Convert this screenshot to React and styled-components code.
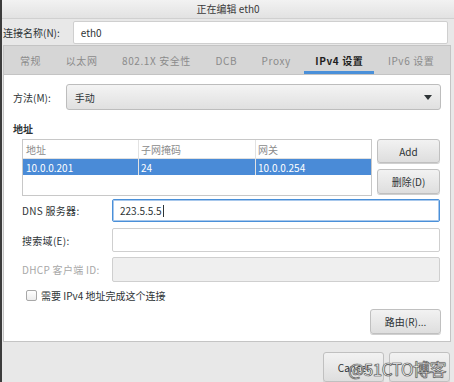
import React from "react";
import styled, { createGlobalStyle } from "styled-components";

const GlobalStyle = createGlobalStyle`
  html, body {
    margin: 0;
    padding: 0;
    background: #e8e8e8;
  }
  body {
    font-family: "Noto Sans CJK SC", "Noto Sans", sans-serif;
    font-size: 10px;
    color: #2e3436;
  }
`;

const tabs = ["常规", "以太网", "802.1X 安全性", "DCB", "Proxy", "IPv4 设置", "IPv6 设置"];

const App = () => {
  return (
    <>
      <GlobalStyle />
      <StyledWindow>
        <StyledTitleBar>正在编辑 eth0</StyledTitleBar>
        <StyledNameRow>
          <StyledLabel>连接名称(N):</StyledLabel>
          <StyledInput $width="375px">eth0</StyledInput>
        </StyledNameRow>
        <StyledNotebook>
          <StyledTabBar>
            {tabs.map((tab) => (
              <StyledTab key={tab} $active={tab === "IPv4 设置"}>
                {tab}
              </StyledTab>
            ))}
          </StyledTabBar>
          <StyledPage>
            <StyledMethodRow>
              <StyledLabel>方法(M):</StyledLabel>
              <StyledCombo>
                <span>手动</span>
                <svg width="8" height="5" viewBox="0 0 8 5">
                  <path d="M0 0 L8 0 L4 5 Z" fill="#2e3436" />
                </svg>
              </StyledCombo>
            </StyledMethodRow>
            <StyledHeading>地址</StyledHeading>
            <StyledAddressBlock>
              <StyledTable>
                <StyledTableRow $header>
                  <StyledCell $first>地址</StyledCell>
                  <StyledCell>子网掩码</StyledCell>
                  <StyledCell $last>网关</StyledCell>
                </StyledTableRow>
                <StyledTableRow $selected>
                  <StyledCell $first>10.0.0.201</StyledCell>
                  <StyledCell>24</StyledCell>
                  <StyledCell $last>10.0.0.254</StyledCell>
                </StyledTableRow>
              </StyledTable>
              <StyledButtonColumn>
                <StyledButton $height="24px">Add</StyledButton>
                <StyledButton $height="25px">删除(D)</StyledButton>
              </StyledButtonColumn>
            </StyledAddressBlock>
            <StyledFieldRow $mt="3px">
              <StyledFieldLabel>DNS 服务器:</StyledFieldLabel>
              <StyledInput $width="328px" $focused>
                223.5.5.5<StyledCaret />
              </StyledInput>
            </StyledFieldRow>
            <StyledFieldRow $mt="6px">
              <StyledFieldLabel>搜索域(E):</StyledFieldLabel>
              <StyledInput $width="328px" $height="24px" />
            </StyledFieldRow>
            <StyledFieldRow $mt="5px">
              <StyledFieldLabel $disabled>DHCP 客户端 ID:</StyledFieldLabel>
              <StyledInput $width="328px" $height="25px" $disabled />
            </StyledFieldRow>
            <StyledCheckRow>
              <StyledCheckbox />
              <span>需要 IPv4 地址完成这个连接</span>
            </StyledCheckRow>
            <StyledRouteRow>
              <StyledButton $width="71px" $height="25px">
                路由(R)...
              </StyledButton>
            </StyledRouteRow>
          </StyledPage>
        </StyledNotebook>
        <StyledFooter>
          <StyledButton $width="61px" $height="30px">
            Cancel
          </StyledButton>
          <StyledButton $width="61px" $height="30px" />
          <StyledWatermark>@51CTO博客</StyledWatermark>
        </StyledFooter>
      </StyledWindow>
    </>
  );
};

const StyledWindow = styled.div`
  position: relative;
  width: 452px;
  height: 382px;
  overflow: hidden;
  background: #e8e8e8;
  border-left: 2px solid #3c3c3c;
  display: flex;
  flex-direction: column;
`;

const StyledTitleBar = styled.div`
  height: 20px;
  line-height: 18px;
  text-align: center;
  color: #3a3a3a;
  background: linear-gradient(#f2f2f2, #e2e2e2);
  border-bottom: 1px solid #d0d0d0;
  box-sizing: border-box;
`;

const StyledNameRow = styled.div`
  height: 28px;
  display: flex;
  align-items: center;
  padding-left: 1px;
  gap: 13px;
`;

const StyledLabel = styled.span`
  color: #2e3436;
  white-space: nowrap;
`;

const StyledInput = styled.div`
  box-sizing: border-box;
  width: ${(p) => p.$width};
  height: ${(p) => p.$height || "23px"};
  display: flex;
  align-items: center;
  padding-left: 7px;
  background: ${(p) => (p.$disabled ? "#efefef" : "#ffffff")};
  border: 1px solid ${(p) => (p.$focused ? "#4a90d9" : "#cfcfcf")};
  box-shadow: ${(p) => (p.$focused ? "inset 0 0 0 1px #a8c8ec" : "none")};
  border-radius: 2px;
  color: #2e3436;
`;

const StyledCaret = styled.span`
  display: inline-block;
  width: 1px;
  height: 12px;
  background: #2e3436;
  margin-left: 1px;
`;

const StyledNotebook = styled.div`
  margin-left: 1px;
  width: 448px;
  display: flex;
  flex-direction: column;
`;

const StyledTabBar = styled.div`
  height: 29px;
  box-sizing: border-box;
  background: #d6d6d6;
  border: 1px solid #c4c4c4;
  border-bottom: none;
  display: flex;
  align-items: stretch;
  padding-left: 5px;
  overflow: hidden;
`;

const StyledTab = styled.div`
  flex-shrink: 0;
  white-space: nowrap;
  padding: 3px 11px 0;
  margin-right: 2.5px;
  display: flex;
  align-items: center;
  letter-spacing: 0.6px;
  color: ${(p) => (p.$active ? "#1e1e1e" : "#8b8b8b")};
  font-weight: ${(p) => (p.$active ? 700 : 400)};
  border-bottom: 3px solid ${(p) => (p.$active ? "#4a90d9" : "transparent")};
`;

const StyledPage = styled.div`
  height: 268px;
  box-sizing: border-box;
  background: #ffffff;
  border: 1px solid #c4c4c4;
  padding: 9px 9px 0 9px;
  display: flex;
  flex-direction: column;
`;

const StyledMethodRow = styled.div`
  display: flex;
  align-items: center;
  gap: 15px;
`;

const StyledCombo = styled.div`
  box-sizing: border-box;
  width: 376px;
  height: 26px;
  display: flex;
  align-items: center;
  justify-content: space-between;
  padding: 0 8px 0 8px;
  border: 1px solid #bdbdbd;
  border-radius: 3px;
  background: linear-gradient(#f4f4f4, #e0e0e0);
`;

const StyledHeading = styled.div`
  font-weight: 700;
  margin-top: 11px;
  color: #2e3436;
`;

const StyledAddressBlock = styled.div`
  display: flex;
  margin-top: 3px;
  padding-left: 9px;
  gap: 5px;
`;

const StyledTable = styled.div`
  box-sizing: border-box;
  width: 350px;
  height: 57px;
  border: 1px solid #c8c8c8;
  background: #ffffff;
`;

const StyledTableRow = styled.div`
  display: grid;
  grid-template-columns: 116px 117px 1fr;
  height: ${(p) => (p.$header ? "18px" : "16px")};
  align-items: center;
  background: ${(p) => (p.$selected ? "#4a8bd7" : "transparent")};
  color: ${(p) => (p.$header ? "#8b8b8b" : p.$selected ? "#ffffff" : "#2e3436")};
  border-bottom: ${(p) => (p.$header ? "1px solid #e0e0e0" : "none")};
`;

const StyledCell = styled.div`
  height: 100%;
  display: flex;
  align-items: center;
  padding-left: ${(p) => (p.$first ? "3px" : "2px")};
  border-right: ${(p) => (p.$last ? "none" : "1px solid #e2e2e2")};
`;

const StyledButtonColumn = styled.div`
  display: flex;
  flex-direction: column;
  gap: 6px;
`;

const StyledButton = styled.div`
  box-sizing: border-box;
  width: ${(p) => p.$width || "63px"};
  height: ${(p) => p.$height};
  display: flex;
  align-items: center;
  justify-content: center;
  border: 1px solid #c0c0c0;
  border-radius: 3px;
  background: linear-gradient(#f2f2f2, #dedede);
  box-shadow: 0 1px 0 #d0d0d0;
  color: #2e3436;
`;

const StyledFieldRow = styled.div`
  display: flex;
  align-items: center;
  margin-top: ${(p) => p.$mt};
  padding-left: 9px;
`;

const StyledFieldLabel = styled.span`
  width: 90px;
  color: ${(p) => (p.$disabled ? "#a8a8a8" : "#2e3436")};
  letter-spacing: 0.3px;
  white-space: nowrap;
`;

const StyledCheckRow = styled.div`
  display: flex;
  align-items: center;
  gap: 4px;
  margin-top: 6px;
  padding-left: 13px;
`;

const StyledCheckbox = styled.span`
  box-sizing: border-box;
  width: 11px;
  height: 11px;
  border: 1px solid #a8a8a8;
  border-radius: 2px;
  background: linear-gradient(#ffffff, #ececec);
`;

const StyledRouteRow = styled.div`
  display: flex;
  justify-content: flex-end;
  margin-top: 6px;
`;

const StyledFooter = styled.div`
  position: relative;
  flex: 1;
  display: flex;
  justify-content: flex-end;
  align-items: flex-start;
  gap: 5px;
  padding: 10px 4px 0 0;
`;

const StyledWatermark = styled.div`
  position: absolute;
  right: 8px;
  top: 14px;
  font-size: 17px;
  color: #ffffff;
  font-family: "Noto Sans CJK SC", "Noto Sans", sans-serif;
  -webkit-text-stroke: 0.6px #5a5a5a;
  text-shadow: 0 0 1px #333;
  letter-spacing: -0.5px;
`;

export default App;
